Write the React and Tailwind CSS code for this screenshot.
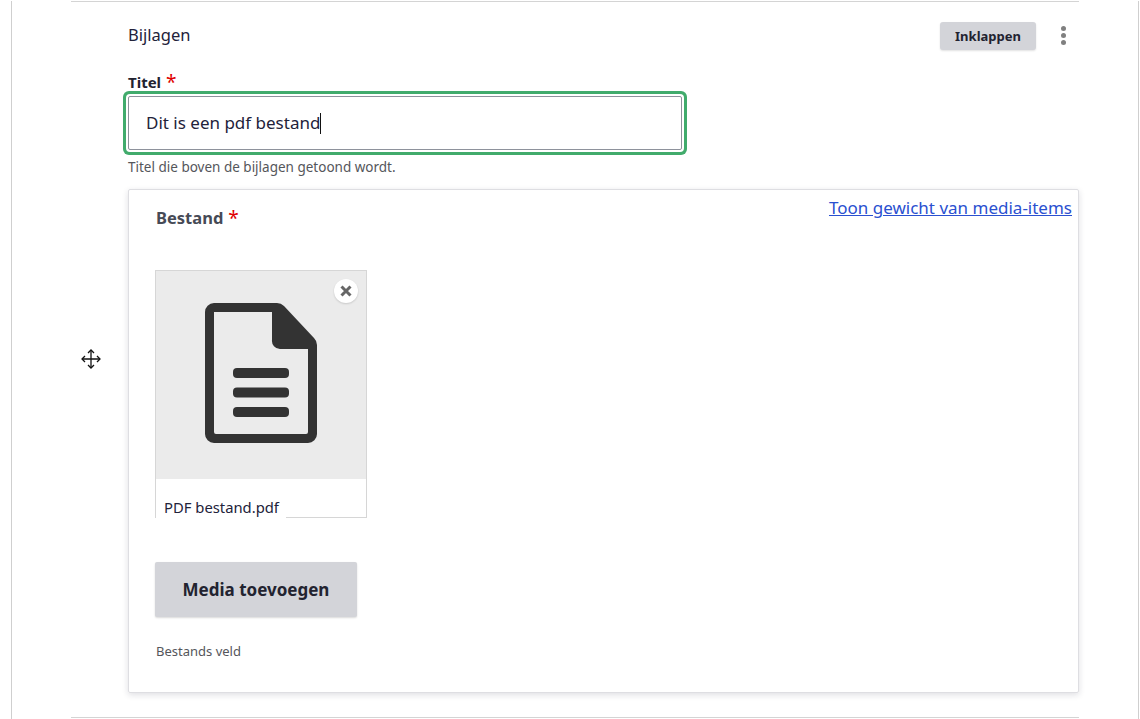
const font = { fontFamily: '"Noto Sans", sans-serif' };

function FileIcon() {
  return (
    <svg width="112" height="140" viewBox="0 0 112 140" fill="none">
      <path d="M8 0H72Q76 0 79 3L109 35Q112 38 112 42V131a9 9 0 0 1-9 9H9a9 9 0 0 1-9-9V9a9 9 0 0 1 9-9Z" fill="#333" />
      <path d="M9 9H67V37a8 8 0 0 0 8 9H103V129a2 2 0 0 1-2 2H11a2 2 0 0 1-2-2Z" fill="#ebebeb" />
      <rect x="28" y="65" width="56" height="10" rx="4" fill="#333" />
      <rect x="28" y="84.500" width="56" height="10" rx="4" fill="#333" />
      <rect x="28" y="104" width="56" height="10" rx="4" fill="#333" />
    </svg>
  );
}

function MoveIcon() {
  return (
    <svg width="22" height="22" viewBox="0 0 22 22" fill="none" stroke="#111" strokeWidth="1.300">
      <path d="M11 2V20M2 11H20" />
      <path d="M8 5L11 2L14 5M8 17L11 20L14 17M5 8L2 11L5 14M17 8L20 11L17 14" />
    </svg>
  );
}

function Star() {
  return <span className="ml-[5px] align-[-1px] text-[19px] leading-[0] font-normal text-[#e00000]">*</span>;
}

export default function App() {
  return (
    <div className="h-[719px] w-[1140px] overflow-hidden bg-white" style={font}>
      <div className="ml-[11px] h-[719px] w-[1128px] border-x border-[#cfcfcf] pl-[59px] pr-[59px]">
        <div className="mt-px flex h-[717px] w-[1008px] border-y border-[#d4d4d4]">
          <div className="flex w-[57px] shrink-0 items-center justify-start pb-px pl-[9px]">
            <MoveIcon />
          </div>
          <div className="w-[951px]">
            <div className="flex h-[68px] items-start justify-between pt-[21px]">
              <span className="text-[16.500px] leading-[24px] text-[#22223a]">Bijlagen</span>
              <div className="-mt-px flex items-start">
                <button className="h-[28px] w-[96px] rounded-[3px] bg-[#d3d4d9] text-[13px] leading-[28px] font-bold text-[#222330] shadow-[0_1px_2px_rgba(0,0,0,0.12)]">
                  Inklappen
                </button>
                <div className="ml-[25px] mr-[13px] mt-[4px] flex flex-col gap-[2px]">
                  <span className="size-[5px] rounded-full bg-[#808080]" />
                  <span className="size-[5px] rounded-full bg-[#808080]" />
                  <span className="size-[5px] rounded-full bg-[#808080]" />
                </div>
              </div>
            </div>
            <div className="h-[24px] text-[15px] leading-[24px] font-bold text-[#222330]">
              Titel<Star />
            </div>
            <div className="mt-[2px] flex h-[54px] w-[554px] items-center rounded-[2px] border border-[#8e929c] bg-white pl-[17px] text-[17px] text-[#22223a] shadow-[0_0_0_2px_#ffffff,0_0_0_5px_#41ab6c]">
              Dit is een pdf bestand
              <span className="h-[21px] w-px bg-[#111]" />
            </div>
            <p className="mt-[8px] text-[13.500px] leading-[18px] text-[#55565b]">Titel die boven de bijlagen getoond wordt.</p>
            <div className="relative mt-[13px] h-[504px] w-[951px] rounded-[2px] border border-[#dedee2] pl-[27px] pt-[16px] shadow-[0_2px_6px_rgba(30,30,60,0.14)]">
              <a className="absolute right-[6px] top-[6px] text-[17px] leading-[24px] text-[#2a50d0] underline">Toon gewicht van media-items</a>
              <div className="text-[16.500px] leading-[24px] font-bold text-[#464a56]">
                Bestand<Star />
              </div>
              <div className="-ml-px mt-[40px] h-[248px] w-[212px] overflow-hidden border-x border-t border-[#d6d6d6]">
                <div className="relative flex h-[208px] items-center justify-center bg-[#ebebeb] pb-[4px]">
                  <FileIcon />
                  <span className="absolute right-[8px] top-[8px] flex size-[24px] items-center justify-center rounded-full bg-white shadow-[0_1px_2px_rgba(0,0,0,0.15)]">
                    <svg width="12" height="12" viewBox="0 0 12 12" stroke="#666" strokeWidth="3">
                      <path d="M1.500 1.500L10.500 10.500M10.500 1.500L1.500 10.500" />
                    </svg>
                  </span>
                </div>
                <div className="relative h-[39px] bg-white pl-[8px] pt-[17px] text-[14.800px] leading-[22px] text-[#22223a]">
                  PDF bestand.pdf
                  <span className="absolute bottom-0 right-0 h-px w-[80px] bg-[#d6d6d6]" />
                </div>
              </div>
              <button className="-ml-px mt-[44px] block h-[55px] w-[202px] rounded-[2px] bg-[#d3d4d9] text-[17px] font-bold text-[#222330] shadow-[0_1px_2px_rgba(0,0,0,0.15)]">
                Media toevoegen
              </button>
              <p className="mt-[25px] text-[13px] leading-[18px] text-[#55565b]">Bestands veld</p>
            </div>
          </div>
        </div>
      </div>
    </div>
  );
}
